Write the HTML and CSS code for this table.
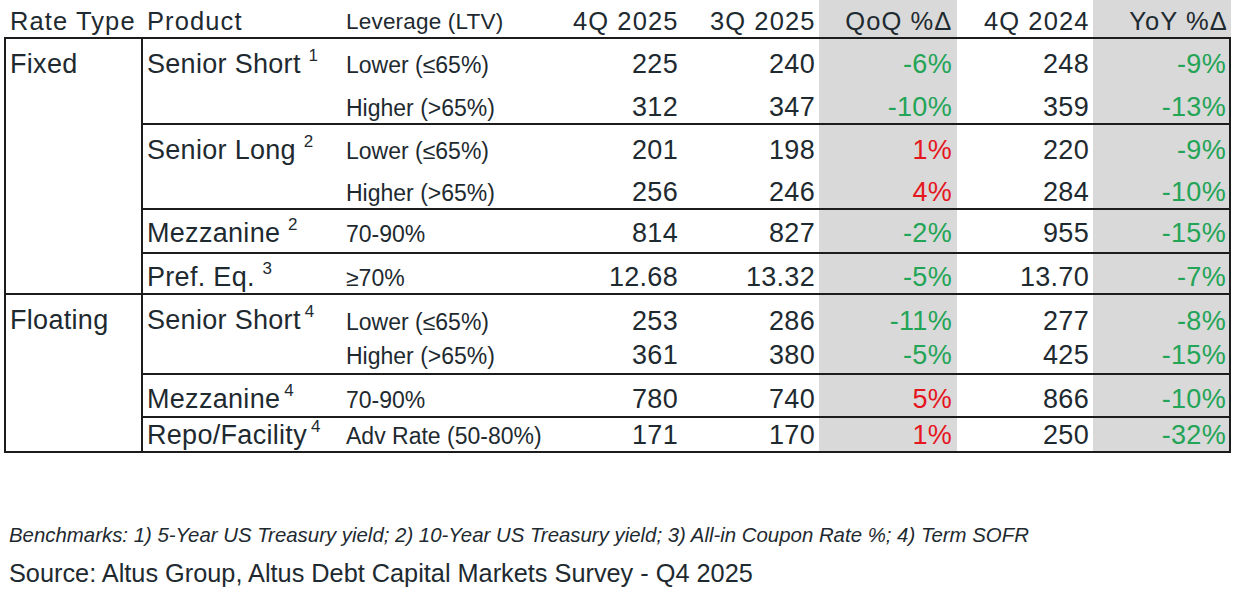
FILE: index.html
```html
<!DOCTYPE html>
<html lang="en">
<head>
<meta charset="utf-8">
<title>Debt Capital Markets Survey</title>
<link rel="stylesheet" href="styles.css">
</head>
<body>
<div class="page">
  <div class="grid">
    <div class="row head">
      <div class="c c1">Rate Type</div>
      <div class="c c2">Product</div>
      <div class="c c3 levh">Leverage (LTV)</div>
      <div class="c num n4">4Q 2025</div>
      <div class="c num n5">3Q 2025</div>
      <div class="c num n6 shade">QoQ %Δ</div>
      <div class="c num n7">4Q 2024</div>
      <div class="c num n8 shade">YoY %Δ</div>
    </div>

    <div class="row r1">
      <div class="c c1 rt span6 t">Fixed</div>
      <div class="c c2 top span2 t"><span class="lbl">Senior Short <sup class="fn">1</sup></span></div>
      <div class="c c3 lev t">Lower (≤65%)</div>
      <div class="c num n4 t">225</div>
      <div class="c num n5 t">240</div>
      <div class="c num n6 shade g t">-6%</div>
      <div class="c num n7 t">248</div>
      <div class="c num n8 shade g t">-9%</div>
    </div>
    <div class="row r2">
      <div class="c c3 lev">Higher (&gt;65%)</div>
      <div class="c num n4">312</div>
      <div class="c num n5">347</div>
      <div class="c num n6 shade g">-10%</div>
      <div class="c num n7">359</div>
      <div class="c num n8 shade g">-13%</div>
    </div>
    <div class="row r3">
      <div class="c c2 top span2 t"><span class="lbl">Senior Long <sup class="fn">2</sup></span></div>
      <div class="c c3 lev t">Lower (≤65%)</div>
      <div class="c num n4 t">201</div>
      <div class="c num n5 t">198</div>
      <div class="c num n6 shade r t">1%</div>
      <div class="c num n7 t">220</div>
      <div class="c num n8 shade g t">-9%</div>
    </div>
    <div class="row r4">
      <div class="c c3 lev">Higher (&gt;65%)</div>
      <div class="c num n4">256</div>
      <div class="c num n5">246</div>
      <div class="c num n6 shade r">4%</div>
      <div class="c num n7">284</div>
      <div class="c num n8 shade g">-10%</div>
    </div>
    <div class="row r5">
      <div class="c c2 t"><span class="lbl">Mezzanine <sup class="fn">2</sup></span></div>
      <div class="c c3 lev t">70-90%</div>
      <div class="c num n4 t">814</div>
      <div class="c num n5 t">827</div>
      <div class="c num n6 shade g t">-2%</div>
      <div class="c num n7 t">955</div>
      <div class="c num n8 shade g t">-15%</div>
    </div>
    <div class="row r6">
      <div class="c c2 t"><span class="lbl">Pref. Eq. <sup class="fn">3</sup></span></div>
      <div class="c c3 lev t">≥70%</div>
      <div class="c num n4 t">12.68</div>
      <div class="c num n5 t">13.32</div>
      <div class="c num n6 shade g t">-5%</div>
      <div class="c num n7 t">13.70</div>
      <div class="c num n8 shade g t">-7%</div>
    </div>

    <div class="row r7">
      <div class="c c1 rt span4 t b">Floating</div>
      <div class="c c2 top span2 t"><span class="lbl">Senior Short<sup class="fn tight">4</sup></span></div>
      <div class="c c3 lev t">Lower (≤65%)</div>
      <div class="c num n4 t">253</div>
      <div class="c num n5 t">286</div>
      <div class="c num n6 shade g t">-11%</div>
      <div class="c num n7 t">277</div>
      <div class="c num n8 shade g t">-8%</div>
    </div>
    <div class="row r8">
      <div class="c c3 lev">Higher (&gt;65%)</div>
      <div class="c num n4">361</div>
      <div class="c num n5">380</div>
      <div class="c num n6 shade g">-5%</div>
      <div class="c num n7">425</div>
      <div class="c num n8 shade g">-15%</div>
    </div>
    <div class="row r9">
      <div class="c c2 t"><span class="lbl">Mezzanine<sup class="fn tight">4</sup></span></div>
      <div class="c c3 lev t">70-90%</div>
      <div class="c num n4 t">780</div>
      <div class="c num n5 t">740</div>
      <div class="c num n6 shade r t">5%</div>
      <div class="c num n7 t">866</div>
      <div class="c num n8 shade g t">-10%</div>
    </div>
    <div class="row r10">
      <div class="c c2 t b"><span class="lbl">Repo/Facility<sup class="fn tight">4</sup></span></div>
      <div class="c c3 lev t b">Adv Rate (50-80%)</div>
      <div class="c num n4 t b">171</div>
      <div class="c num n5 t b">170</div>
      <div class="c num n6 shade r t b">1%</div>
      <div class="c num n7 t b">250</div>
      <div class="c num n8 shade g t b">-32%</div>
    </div>
  </div>

  <div class="notes">
    <p class="bench">Benchmarks: 1) 5-Year US Treasury yield; 2) 10-Year US Treasury yield; 3) All-in Coupon Rate %; 4) Term SOFR</p>
    <p class="source">Source: Altus Group, Altus Debt Capital Markets Survey - Q4 2025</p>
  </div>
</div>
</body>
</html>
```

FILE: styles.css
```css
* { box-sizing: border-box; }

html, body {
  margin: 0;
  padding: 0;
  background: #ffffff;
}

body {
  width: 1234px;
  height: 591px;
  overflow: hidden;
  font-family: "Liberation Sans", Arial, sans-serif;
  color: #1e2a30;
}

.page {
  padding-left: 4px;
}

.grid {
  display: grid;
  grid-template-columns: 139px 199px 204px 137px 136px 138px 136px 138px;
  grid-template-rows: 37px 43px 43px 43px 42px 44px 41px 44px 36px 43px 37px;
  width: 1227px;
}

.row { display: contents; }

.c {
  display: flex;
  align-items: flex-end;
  font-size: 27px;
  line-height: 30px;
  letter-spacing: 0.3px;
  padding-bottom: 1.5px;
  white-space: nowrap;
}

.lbl { white-space: nowrap; }

.c1 { grid-column: 1; padding-left: 4px; }
.c2 { grid-column: 2; padding-left: 4px; }
.c3 { grid-column: 3; padding-left: 4px; }
.n4 { grid-column: 4; padding-right: 5px; }
.n5 { grid-column: 5; padding-right: 4px; }
.n6 { grid-column: 6; padding-right: 5px; }
.n7 { grid-column: 7; padding-right: 4px; }
.n8 { grid-column: 8; padding-right: 3px; border-right: 2px solid #1c1c1c; }

.num { justify-content: flex-end; }

.shade { background: #d9d9d9; }
.g { color: #23a456; }
.r { color: #e5161e; }

/* header row */
.head > .c {
  font-size: 25.5px;
  letter-spacing: 1.1px;
  padding-bottom: 1.5px;
  border-right: none;
}
.head > .c1 { padding-left: 6px; }
.head > .n4 { padding-right: 4.5px; }
.head > .n5 { padding-right: 3.5px; }
.head > .n6 { padding-right: 4.5px; }
.head > .n7 { padding-right: 3.5px; }
.head > .n8 { padding-right: 3px; }
.head > .levh {
  font-size: 22.5px;
  letter-spacing: 0.2px;
  line-height: 28px;
}

/* leverage column */
.lev {
  font-size: 23px;
  letter-spacing: 0;
  line-height: 28px;
  padding-bottom: 1px;
}

/* row-level baseline tweaks */
.r5 > .c { padding-bottom: 4px; }
.r8 > .c { padding-bottom: 3px; }
.r9 > .c { padding-bottom: 2px; }

/* spanning cells */
.span6 { grid-row: span 6; }
.span4 { grid-row: span 4; }
.span2 { grid-row: span 2; }
.rt {
  align-items: flex-start;
  padding-top: 10px;
  border-left: 2px solid #1c1c1c;
  border-right: 2px solid #1c1c1c;
}
.top {
  align-items: flex-start;
  padding-top: 10px;
}

/* borders */
.t { border-top: 2px solid #1c1c1c; }
.b { border-bottom: 2px solid #1c1c1c; }

/* footnote markers */
.fn {
  font-size: 17px;
  line-height: 0;
  letter-spacing: 0;
  vertical-align: 12px;
}
.fn.tight { margin-left: 4px; }

/* notes */
.notes {
  margin-top: 70px;
}
.notes p {
  margin: 0;
  white-space: nowrap;
}
.bench {
  font-size: 20.4px;
  font-style: italic;
  line-height: 24px;
  padding-left: 5px;
}
.source {
  margin-top: 11px !important;
  font-size: 25.3px;
  line-height: 30px;
  padding-left: 5px;
}
```
